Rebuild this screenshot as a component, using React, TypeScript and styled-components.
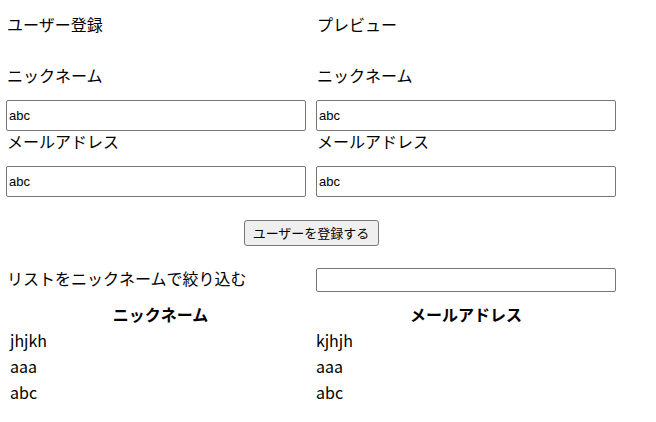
import React, { useState } from "react";
import styled, { createGlobalStyle } from "styled-components";

const GlobalStyle = createGlobalStyle`
  body {
    margin: 0;
    background: #ffffff;
    color: #000000;
    font-family: "Noto Sans CJK JP", "Liberation Sans", sans-serif;
  }
`;

const Page = styled.div`
  width: 620px;
  padding: 0 6px;
  font-family: "Noto Sans CJK JP", "Liberation Sans", sans-serif;
  font-size: 16px;
`;

const FormGrid = styled.div`
  display: grid;
  grid-template-columns: 310px 310px;
`;

const Column = styled.div`
  display: flex;
  flex-direction: column;
  align-items: flex-start;
`;

const Title = styled.div`
  margin-top: 12px;
  margin-bottom: 29px;
  line-height: 24px;
  padding-left: 1px;
`;

const Label = styled.label`
  line-height: 20px;
  padding: 0 0 4px 1px;
  margin-bottom: 11px;
`;

const TextInput = styled.input<{ $h?: number }>`
  box-sizing: border-box;
  width: 300px;
  height: ${(p) => p.$h ?? 31}px;
  margin: 0;
  padding: 1px 2px;
  border: 1px solid #767676;
  border-radius: 2px;
  font-family: "Liberation Sans", Arial, sans-serif;
  font-size: 13px;
  color: #000;
  background: #fff;
  outline: none;
`;

const ButtonRow = styled.div`
  display: flex;
  justify-content: center;
  width: 610px;
  margin-top: 23px;
`;

const Button = styled.button`
  box-sizing: border-box;
  width: 135px;
  height: 26px;
  padding: 0 8px 1px;
  border: 1px solid #767676;
  border-radius: 3px;
  background: #efefef;
  font-family: "Noto Sans CJK JP", sans-serif;
  font-size: 13px;
  color: #000;
  white-space: nowrap;
`;

const FilterRow = styled.div`
  display: grid;
  grid-template-columns: 310px 300px;
  align-items: center;
  margin-top: 22px;
`;

const FilterLabel = styled.label`
  line-height: 20px;
  padding: 0 0 4px 1px;
`;

const Table = styled.div`
  display: grid;
  grid-template-columns: 301px 300px;
  column-gap: 5px;
  grid-auto-rows: 26px;
  margin-top: 11px;
  padding-left: 4px;
  align-items: start;
`;

const HeadCell = styled.div`
  font-weight: bold;
  text-align: center;
  line-height: 22px;
`;

const Cell = styled.div`
  line-height: 22px;
`;

const rows = [
  { nick: "jhjkh", mail: "kjhjh" },
  { nick: "aaa", mail: "aaa" },
  { nick: "abc", mail: "abc" },
];

export default function App() {
  const [nick, setNick] = useState("abc");
  const [mail, setMail] = useState("abc");
  const [filter, setFilter] = useState("");
  return (
    <>
      <GlobalStyle />
      <Page>
        <FormGrid>
          <Column>
            <Title>ユーザー登録</Title>
            <Label>ニックネーム</Label>
            <TextInput value={nick} onChange={(e) => setNick(e.target.value)} />
            <Label>メールアドレス</Label>
            <TextInput value={mail} onChange={(e) => setMail(e.target.value)} />
          </Column>
          <Column>
            <Title>プレビュー</Title>
            <Label>ニックネーム</Label>
            <TextInput value={nick} readOnly />
            <Label>メールアドレス</Label>
            <TextInput value={mail} readOnly />
          </Column>
        </FormGrid>
        <ButtonRow>
          <Button>ユーザーを登録する</Button>
        </ButtonRow>
        <FilterRow>
          <FilterLabel>リストをニックネームで絞り込む</FilterLabel>
          <TextInput $h={24} value={filter} onChange={(e) => setFilter(e.target.value)} />
        </FilterRow>
        <Table>
          <HeadCell>ニックネーム</HeadCell>
          <HeadCell>メールアドレス</HeadCell>
          {rows.map((r, i) => (
            <React.Fragment key={i}>
              <Cell>{r.nick}</Cell>
              <Cell>{r.mail}</Cell>
            </React.Fragment>
          ))}
        </Table>
      </Page>
    </>
  );
}
